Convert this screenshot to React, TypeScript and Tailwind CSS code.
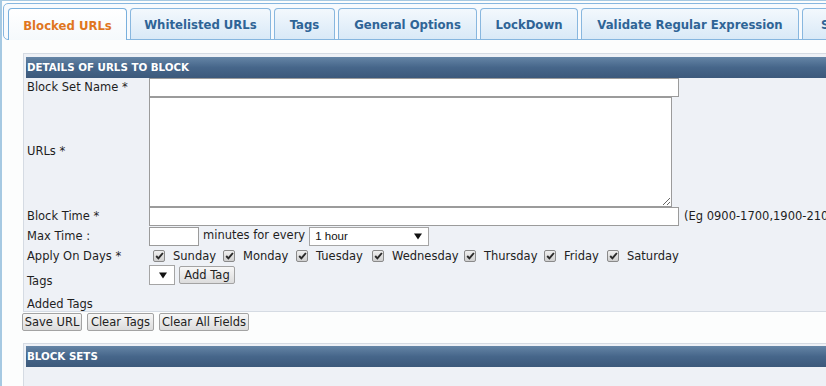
import React from "react";

const Tri = () => (
  <svg width="8" height="7" viewBox="0 0 8 7" className="shrink-0">
    <path d="M0 0.5 L8 0.5 L4 6.5 Z" fill="#111" />
  </svg>
);

const Check = () => (
  <span className="inline-flex h-[12px] w-[12px] shrink-0 items-center justify-center rounded-[2px] border border-[#8a8a8a] bg-linear-to-b from-[#f0f0f0] to-[#cfcfcf]">
    <svg width="9" height="8" viewBox="0 0 9 8">
      <path d="M1.2 4 L3.4 6.3 L7.9 1" stroke="#2a2a2a" strokeWidth="1.9" fill="none" />
    </svg>
  </span>
);

const Btn = ({ label, w }: { label: string; w: string }) => (
  <div
    className={`flex h-[18px] ${w} items-center justify-center rounded-[2px] border border-[#a3a3a3] bg-linear-to-b from-[#f7f7f7] to-[#dcdcdc] pt-[1px] text-[11.5px] leading-none text-[#222]`}
  >
    {label}
  </div>
);

const tabs: { label: string; w: string; active?: boolean }[] = [
  { label: "Blocked URLs", w: "w-[119px]", active: true },
  { label: "Whitelisted URLs", w: "w-[141px]" },
  { label: "Tags", w: "w-[61px]" },
  { label: "General Options", w: "w-[139px]" },
  { label: "LockDown", w: "w-[98px]" },
  { label: "Validate Regular Expression", w: "w-[218px]" },
  { label: "Statistics", w: "w-[100px]" },
];

const days: { label: string; w: string }[] = [
  { label: "Sunday", w: "w-[70px]" },
  { label: "Monday", w: "w-[73px]" },
  { label: "Tuesday", w: "w-[76px]" },
  { label: "Wednesday", w: "w-[92px]" },
  { label: "Thursday", w: "w-[80px]" },
  { label: "Friday", w: "w-[63px]" },
  { label: "Saturday", w: "w-[80px]" },
];

const Label = ({ children, h }: { children: React.ReactNode; h: string }) => (
  <div className={`flex ${h} items-center pl-[1px] text-[11.5px] text-[#1e1e1e] whitespace-nowrap`}>{children}</div>
);

export default function App() {
  return (
    <div className="h-[386px] w-[826px] overflow-hidden bg-white font-['DejaVu_Sans',Verdana,sans-serif]">
      <div className="h-full w-[900px] border-l-2 border-t border-[#a6c9e2] bg-[#fcfdfd] pl-[1px] pt-[2px]">
        {/* tab nav */}
        <div className="rounded-[5px] border border-[#86b6df] bg-[#f7fafd] pl-[4px] pt-[4px]">
          <div className="flex h-[31px] items-start gap-[3px]">
            {tabs.map((t) =>
              t.active ? (
                <div
                  key={t.label}
                  className={`relative flex h-[32px] ${t.w} shrink-0 items-center justify-center rounded-t-[4px] border border-b-0 border-[#79b0dd] bg-linear-to-b from-[#ffffff] to-[#f5f9fc] pt-[4px] text-[11.7px] font-bold text-[#e0761f]`}
                >
                  {t.label}
                </div>
              ) : (
                <div
                  key={t.label}
                  className={`flex h-[31px] ${t.w} shrink-0 items-center justify-center rounded-t-[4px] border border-b-0 border-[#88b7df] bg-linear-to-b from-[#f3f8fd] to-[#d9e9f7] pt-[4px] text-[11.7px] font-bold whitespace-nowrap text-[#2f6496]`}
                >
                  {t.label}
                </div>
              )
            )}
          </div>
        </div>

        {/* content */}
        <div className="pl-[19px] pt-[13px]">
          <div className="ml-[1px] border border-[#d5dbe3] bg-[#eef1f6] pl-[2px] pt-[3px]">
            <div className="flex h-[21px] items-center bg-linear-to-b from-[#6585a6] via-[#46668a] to-[#3c597b] pl-[1px] pt-[1px] text-[10.3px] font-bold text-white">
              DETAILS OF URLS TO BLOCK
            </div>
            <div className="grid grid-cols-[123px_1fr]">
              <Label h="h-[19px] pt-[1px]">Block Set Name *</Label>
              <div className="flex h-[19px] items-start">
                <input className="h-[19px] w-[530px] border border-[#9b9b9b] bg-white outline-none" readOnly />
              </div>

              <Label h="h-[110px]">URLs *</Label>
              <div className="flex h-[110px] items-start">
                <textarea className="h-[110px] w-[523px] border border-[#9b9b9b] bg-white outline-none" readOnly />
              </div>

              <Label h="h-[19px] pt-[1px]">Block Time *</Label>
              <div className="flex h-[19px] items-center whitespace-nowrap">
                <input className="h-[19px] w-[530px] shrink-0 border border-[#9b9b9b] bg-white outline-none" readOnly />
                <span className="ml-[5px] pt-[1px] text-[11.5px] text-[#1e1e1e]">(Eg 0900-1700,1900-2100)</span>
              </div>

              <Label h="h-[20px] pt-[2px]">Max Time :</Label>
              <div className="flex h-[20px] items-end whitespace-nowrap">
                <input className="h-[19px] w-[50px] shrink-0 border border-[#9b9b9b] bg-white outline-none" readOnly />
                <span className="ml-[4px] mb-[2px] text-[11.5px] text-[#1e1e1e]">minutes for every</span>
                <div className="ml-[4px] flex h-[19px] w-[120px] items-center justify-between border border-[#a5a5a5] bg-white pl-[5px] pr-[6px] font-['Liberation_Sans',Arial,sans-serif] text-[11.5px] text-[#111]">
                  <span>1 hour</span>
                  <Tri />
                </div>
              </div>

              <Label h="h-[19px] pt-[2px]">Apply On Days *</Label>
              <div className="flex h-[19px] items-center pl-[4px] whitespace-nowrap">
                {days.map((d) => (
                  <div key={d.label} className={`flex ${d.w} shrink-0 items-center`}>
                    <Check />
                    <span className="ml-[8px] pt-[3px] text-[11.5px] text-[#222]">{d.label}</span>
                  </div>
                ))}
              </div>

              <Label h="h-[32px] pt-[2px]">Tags</Label>
              <div className="flex h-[32px] items-start">
                <div className="flex h-[20px] w-[26px] items-center justify-center border border-[#a5a5a5] bg-white pl-[2px]">
                  <Tri />
                </div>
                <div className="ml-[4px] mt-[1px]">
                  <Btn label="Add Tag" w="w-[56px]" />
                </div>
              </div>

              <Label h="h-[14px] pt-[1px]">Added Tags</Label>
              <div className="h-[14px]" />
            </div>
          </div>

          <div className="mt-[1px] flex gap-[5px]">
            <Btn label="Save URL" w="w-[60px]" />
            <Btn label="Clear Tags" w="w-[67px]" />
            <Btn label="Clear All Fields" w="w-[90px]" />
          </div>

          <div className="ml-[1px] mt-[12px] h-[100px] border border-[#d5dbe3] bg-[#eef1f6] pl-[2px] pt-[2px]">
            <div className="flex h-[21px] items-center bg-linear-to-b from-[#6585a6] via-[#46668a] to-[#3c597b] pl-[1px] pt-[1px] text-[10.3px] font-bold text-white">
              BLOCK SETS
            </div>
          </div>
        </div>
      </div>
    </div>
  );
}
